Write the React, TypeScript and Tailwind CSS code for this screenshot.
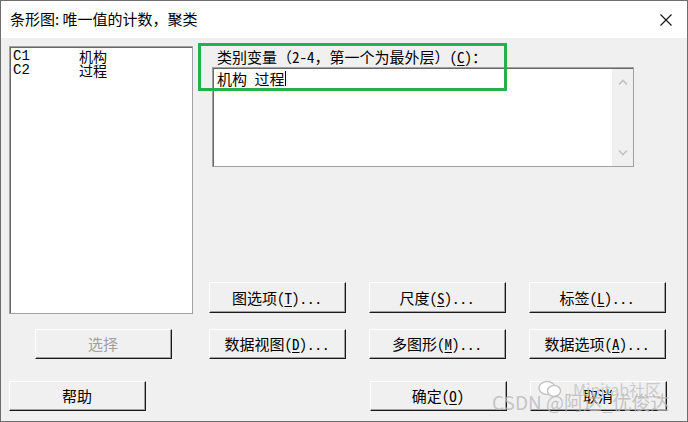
import { ReactNode } from "react";

const CJK = "font-['Noto_Sans_Mono_CJK_SC','Noto_Sans_CJK_SC',sans-serif]";

function Btn({
  children,
  disabled,
  className = "",
}: {
  children: ReactNode;
  disabled?: boolean;
  className?: string;
}) {
  return (
    <div
      className={`flex h-[30px] w-[137px] shrink-0 border-t border-l border-r border-b border-t-white border-l-white border-r-[#1a1a1a] border-b-[#1a1a1a] bg-[#f0f0f0] ${className}`}
    >
      <div
        className={`flex flex-1 items-center justify-center border-r border-b border-[#a0a0a0] text-[15px] leading-none ${
          disabled ? "text-[#a0a0a0]" : "text-black"
        }`}
      >
        {children}
      </div>
    </div>
  );
}

function Key({ k }: { k: string }) {
  return (
    <>
      (<span className="underline underline-offset-2">{k}</span>)...
    </>
  );
}

function Chevron({ up }: { up?: boolean }) {
  return (
    <svg width="10" height="6" viewBox="0 0 10 6">
      <path
        d={up ? "M1 5.5L5 1.5L9 5.5" : "M1 0.5L5 4.5L9 0.5"}
        fill="none"
        stroke="#c2c2c2"
        strokeWidth="1.6"
      />
    </svg>
  );
}

export default function App() {
  return (
    <div className={`h-[422px] w-[688px] overflow-hidden bg-white ${CJK}`}>
      <div className="flex h-full w-full flex-col border border-[#6e6e6e]">
        {/* title bar */}
        <div className="flex h-[37px] shrink-0 items-center justify-between bg-white pl-[9px] pr-[15px]">
          <span className="font-['Noto_Sans_CJK_SC',sans-serif] text-[15px] text-black">
            条形图: 唯一值的计数，聚类
          </span>
          <svg width="12" height="12" viewBox="0 0 12 12">
            <path d="M0.5 0.5L11.5 11.5M11.5 0.5L0.5 11.5" stroke="#111" strokeWidth="1.1" />
          </svg>
        </div>

        {/* body */}
        <div className="relative flex-1 bg-[#f0f0f0] pl-[8px] pt-[8px]">
          <div className="flex">
            {/* variable list */}
            <div className="h-[268px] w-[184px] shrink-0 border border-[#a0a0a0]">
              <div className="h-full border-t border-l border-[#696969] bg-white pl-[2px] pt-[1px] text-[14px] leading-[14px] text-black">
                <div className="flex">
                  <span className="w-[66px] font-['Liberation_Mono',monospace]">C1</span>
                  <span>机构</span>
                </div>
                <div className="flex">
                  <span className="w-[66px] font-['Liberation_Mono',monospace]">C2</span>
                  <span>过程</span>
                </div>
              </div>
            </div>

            <div className="ml-[16px] flex w-[457px] flex-col">
              <div className="relative">
                <div className="h-[21px] pl-[8px] text-[15px] leading-[21px] text-black">
                  类别变量（2-4，第一个为最外层）(<span className="underline underline-offset-2">C</span>)：
                </div>
                <div className="ml-[3px] flex h-[100px] w-[422px] border border-[#a0a0a0]">
                  <div className="flex flex-1 border-t border-l border-[#696969] bg-white">
                    <div className="flex flex-1 items-start pl-[3px] text-[15px] leading-[20px] text-black">
                      <span>机构 过程</span>
                      <span className="mt-[2px] h-[15px] w-[1px] bg-black" />
                    </div>
                    <div className="flex w-[21px] flex-col items-center justify-between bg-[#f0f0f0] py-[10px]">
                      <Chevron up />
                      <Chevron />
                    </div>
                  </div>
                </div>
                {/* highlight frame */}
                <div className="absolute left-[-11px] top-[-3px] h-[48px] w-[309px] border-[3px] border-[#22b14c]" />
              </div>

              <div className="mt-auto mb-[1px] flex gap-[23px]">
                <Btn className="h-[31px]">
                  图选项<Key k="T" />
                </Btn>
                <Btn className="h-[31px]">
                  尺度<Key k="S" />
                </Btn>
                <Btn className="h-[31px]">
                  标签<Key k="L" />
                </Btn>
              </div>
            </div>
          </div>

          <div className="mt-[15px] flex">
            <Btn disabled className="ml-[26px]">
              选择
            </Btn>
            <div className="ml-[37px] flex gap-[23px]">
              <Btn>
                数据视图<Key k="D" />
              </Btn>
              <Btn>
                多图形<Key k="M" />
              </Btn>
              <Btn>
                数据选项<Key k="A" />
              </Btn>
            </div>
          </div>

          <div className="mt-[22px] flex">
            <Btn className="w-[136px]">帮助</Btn>
            <div className="ml-[224px] flex gap-[23px]">
              <Btn>
                确定(<span className="underline underline-offset-2">O</span>)
              </Btn>
              <Btn>取消</Btn>
            </div>
          </div>

          {/* watermark */}
          <div className="pointer-events-none absolute left-[537px] top-[341px] flex items-center gap-[11px] whitespace-nowrap text-[16px] leading-[20px] text-[#c4c4c4]/85">
            <svg width="24" height="18" viewBox="0 0 24 18">
              <ellipse cx="9" cy="8" rx="8" ry="6.5" fill="#fff" stroke="#c4c4c4" strokeWidth="1.5" />
              <ellipse cx="16" cy="11" rx="6.5" ry="5.5" fill="#fff" stroke="#c4c4c4" strokeWidth="1.5" />
            </svg>
            <span className="font-['Noto_Sans_CJK_SC',sans-serif]">Minitab社区</span>
          </div>
          <div className="pointer-events-none absolute left-[491px] top-[353px] whitespace-nowrap font-['Noto_Sans_CJK_SC',sans-serif] text-[19px] leading-[22px] text-[#b8b8b8]/80">
            CSDN @阿达_优俊达
          </div>
        </div>
      </div>
    </div>
  );
}
